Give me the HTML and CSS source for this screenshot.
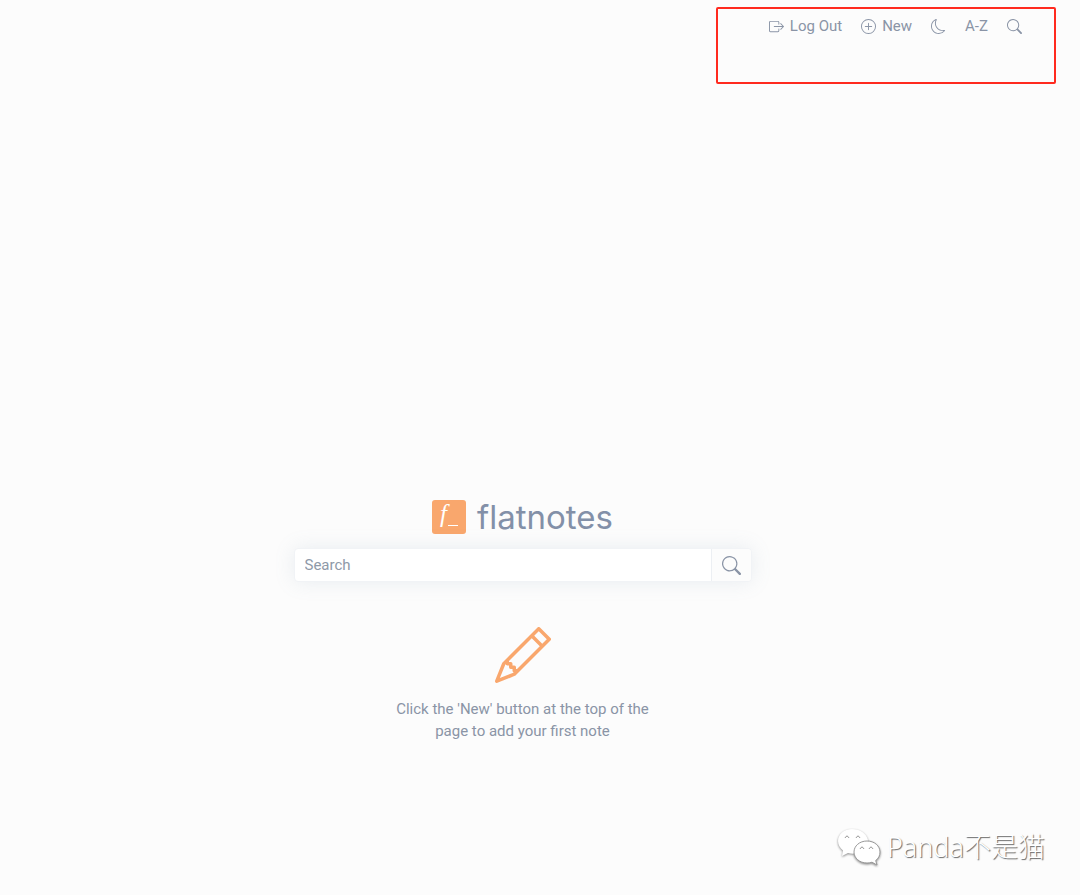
FILE: index.html
```html
<!DOCTYPE html>
<html lang="en">

<head>
  <meta charset="UTF-8">
  <meta name="viewport" content="width=device-width, initial-scale=1.0">
  <link rel="stylesheet" href="styles.css">
  <title>flatnotes</title>
</head>

<body>

  <nav class="navbar">
    <button type="button" class="nav-button">
      <svg class="icon" viewBox="0 0 16 16"><path d="M10 12.5a.5.5 0 0 1-.5.5h-8a.5.5 0 0 1-.5-.5v-9a.5.5 0 0 1 .5-.5h8a.5.5 0 0 1 .5.5v2a.5.5 0 0 0 1 0v-2A1.5 1.5 0 0 0 9.5 2h-8A1.5 1.5 0 0 0 0 3.5v9A1.5 1.5 0 0 0 1.5 14h8a1.5 1.5 0 0 0 1.5-1.5v-2a.5.5 0 0 0-1 0v2z"/><path d="M15.854 8.354a.5.5 0 0 0 0-.708l-3-3a.5.5 0 0 0-.708.708L14.293 7.5H5.5a.5.5 0 0 0 0 1h8.793l-2.147 2.146a.5.5 0 0 0 .708.708l3-3z"/></svg>
      Log Out
    </button>
    <button type="button" class="nav-button">
      <svg class="icon" viewBox="0 0 16 16"><path d="M8 15A7 7 0 1 1 8 1a7 7 0 0 1 0 14zm0 1A8 8 0 1 0 8 0a8 8 0 0 0 0 16z"/><path d="M8 4a.5.5 0 0 1 .5.5v3h3a.5.5 0 0 1 0 1h-3v3a.5.5 0 0 1-1 0v-3h-3a.5.5 0 0 1 0-1h3v-3A.5.5 0 0 1 8 4z"/></svg>
      New
    </button>
    <button type="button" class="nav-button" aria-label="Toggle theme">
      <svg class="icon" viewBox="0 0 16 16"><path d="M6 .278a.768.768 0 0 1 .08.858 7.208 7.208 0 0 0-.878 3.46c0 4.021 3.278 7.277 7.318 7.277.527 0 1.04-.055 1.533-.16a.787.787 0 0 1 .81.316.733.733 0 0 1-.031.893A8.349 8.349 0 0 1 8.344 16C3.734 16 0 12.286 0 7.71 0 4.266 2.114 1.312 5.124.06A.752.752 0 0 1 6 .278zM4.858 1.311A7.269 7.269 0 0 0 1.025 7.71c0 4.02 3.279 7.276 7.319 7.276a7.316 7.316 0 0 0 5.205-2.162c-.337.042-.68.063-1.029.063-4.61 0-8.343-3.714-8.343-8.29 0-1.167.242-2.278.681-3.286z"/></svg>
    </button>
    <button type="button" class="nav-button">A-Z</button>
    <button type="button" class="nav-button" aria-label="Search">
      <svg class="icon" viewBox="0 0 16 16"><path d="M11.742 10.344a6.5 6.5 0 1 0-1.397 1.398h-.001c.03.04.062.078.098.115l3.85 3.85a1 1 0 0 0 1.415-1.414l-3.85-3.85a1.007 1.007 0 0 0-.115-.1zM12 6.5a5.5 5.5 0 1 1-11 0 5.5 5.5 0 0 1 11 0z"/></svg>
    </button>
  </nav>

  <main class="home">
    <h1 class="logo">
      <svg class="logo-mark" viewBox="0 0 34 34" aria-hidden="true">
        <rect width="34" height="34" rx="3"/>
        <text x="8" y="22">f</text>
        <path d="M16 25.500h10"/>
      </svg>
      flatnotes
    </h1>

    <form class="search" onsubmit="return false">
      <input type="text" class="search-input" placeholder="Search" aria-label="Search">
      <button type="submit" class="search-button" aria-label="Submit search">
        <svg class="icon" viewBox="0 0 16 16"><path d="M11.742 10.344a6.5 6.5 0 1 0-1.397 1.398h-.001c.03.04.062.078.098.115l3.85 3.85a1 1 0 0 0 1.415-1.414l-3.85-3.85a1.007 1.007 0 0 0-.115-.1zM12 6.5a5.5 5.5 0 1 1-11 0 5.5 5.5 0 0 1 11 0z"/></svg>
      </button>
    </form>

    <svg class="pencil" viewBox="0 0 16 16"><path d="M12.146.146a.5.5 0 0 1 .708 0l3 3a.5.5 0 0 1 0 .708l-10 10a.5.5 0 0 1-.168.11l-5 2a.5.5 0 0 1-.65-.65l2-5a.5.5 0 0 1 .11-.168l10-10zM11.207 2.500 13.500 4.793 14.793 3.500 12.500 1.207 11.207 2.500zm1.586 3L10.500 3.207 4 9.707V10h.5a.5.5 0 0 1 .5.5v.5h.5a.5.5 0 0 1 .5.5v.5h.293l6.500-6.500zm-9.761 5.175-.106.106-1.528 3.821 3.821-1.528.106-.106A.5.5 0 0 1 5 12.500V12h-.5a.5.5 0 0 1-.5-.5V11h-.5a.5.5 0 0 1-.468-.325z"/></svg>
    <p class="message">Click the 'New' button at the top of the page to add your first note</p>
  </main>

  <div class="highlight"></div>

  <div class="watermark">
    <svg class="wechat" viewBox="0 0 44 38">
      <path d="M15 1C7 1 1 6.500 1 13c0 4 2 7 5 9.500L5 28l6-3c2 .5 4 .8 6 .6C22 30 30 24 31 12 29.500 5.500 23 1 15 1z"/>
      <path class="front" d="M30 13c-7.500 0-13 5-13 11s5.500 11 13 11c2 0 3.500-.3 5-.8l5 2.800-1.300-4.500C41.500 30.500 43 27.500 43 24c0-6-5.500-11-13-11z"/>
      <g class="eyes"><path d="M8 10q2-4 4 0M19 10q2-4 4 0M23 21q2-4 4 0M32 21q2-4 4 0"/></g>
    </svg>
    <span>Panda不是猫</span>
  </div>

</body>

</html>
```
FILE: styles.css
```css
* {
  box-sizing: border-box;
}

body {
  display: flex;
  flex-direction: column;
  min-height: 100vh;
  margin: 0;
  padding: 13px 35px 0 0;
  background-color: #fcfcfc;
  color: #8a94a6;
  font-family: Roboto, sans-serif;
  font-size: 15px;
  line-height: 22px;
}

button,
input {
  font: inherit;
  color: inherit;
}

button {
  border: none;
  background: none;
  cursor: pointer;
}

.icon {
  width: 15px;
  height: 15px;
  fill: currentColor;
}

.navbar {
  display: flex;
  justify-content: flex-end;
  gap: 3px;
  padding: 0 15px;
}

.nav-button {
  display: flex;
  align-items: center;
  gap: 6px;
  padding: 2px 8px;
}

.home {
  display: flex;
  flex: 1;
  flex-direction: column;
  align-items: center;
  justify-content: flex-end;
  padding-bottom: 153px;
}

.logo {
  display: flex;
  align-items: center;
  gap: 11px;
  margin: 0 0 9px;
  color: #8390a8;
  font-family: Inter, sans-serif;
  font-size: 33px;
  font-weight: 400;
  line-height: 44px;
}

.logo-mark {
  width: 34px;
  height: 34px;
}

.logo-mark rect {
  fill: #f9a76d;
}

.logo-mark text {
  fill: #ffffff;
  font-family: "Liberation Serif", serif;
  font-size: 25px;
  font-style: italic;
}

.logo-mark path {
  stroke: #ffffff;
}

.search {
  display: flex;
  width: 458px;
  max-width: 100%;
  margin-bottom: 45px;
  border: 1px solid #f1f3f6;
  border-radius: 4px;
  background-color: #ffffff;
  box-shadow: 0 0 20px rgba(120, 145, 175, 0.15);
}

.search-input {
  flex: 1;
  min-width: 0;
  padding: 5px 10px;
  border: none;
  background: none;
  outline: none;
}

.search-input::placeholder {
  color: #8e99a8;
  opacity: 1;
}

.search-button {
  display: flex;
  align-items: center;
  padding: 0 10px;
  border-left: 1px solid #eceff3;
  border-radius: 0 4px 4px 0;
  background-color: #fcfcfc;
}

.search-button .icon {
  width: 19px;
  height: 19px;
}

.pencil {
  width: 56px;
  height: 56px;
  margin-bottom: 15px;
  fill: #f9a76d;
}

.message {
  width: 280px;
  margin: 0;
  text-align: center;
}

/* Red frame around the menu */
.highlight {
  position: absolute;
  top: 7px;
  right: 24px;
  width: 340px;
  height: 77px;
  border: 2px solid #ff2a1f;
  border-radius: 2px;
  pointer-events: none;
}

.watermark {
  position: absolute;
  right: 35px;
  bottom: 28px;
  display: flex;
  align-items: center;
  gap: 6px;
  color: #ffffff;
  font-family: "Noto Sans", "Noto Sans CJK SC", sans-serif;
  font-size: 27px;
  font-weight: 300;
  line-height: 40px;
  text-shadow: 1px 1px 1px #666666;
}

.wechat {
  width: 44px;
  height: 38px;
  fill: #ffffff;
  filter: drop-shadow(0 1px 1px #888888);
}

.front {
  stroke: #999999;
}

.eyes {
  fill: none;
  stroke: #999999;
}
```
